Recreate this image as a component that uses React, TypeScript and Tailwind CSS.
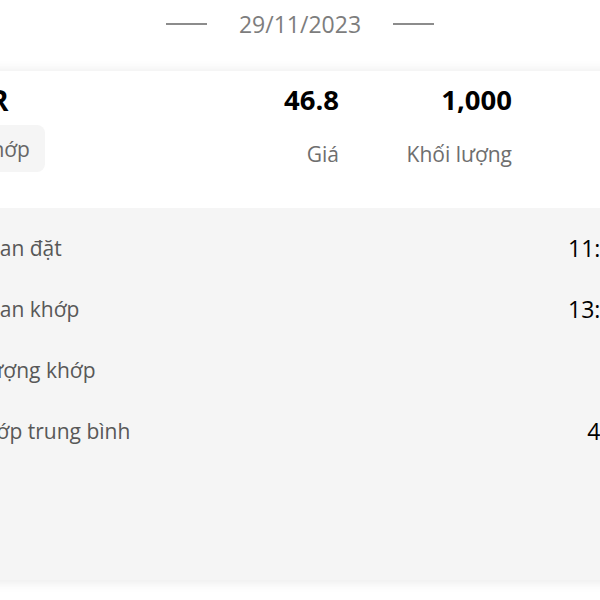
const rows = [
  { label: "Thời gian đặt", value: "11:23:45" },
  { label: "Thời gian khớp", value: "13:05:12" },
  { label: "Khối lượng khớp", value: "1,000" },
  { label: "Giá khớp trung bình", value: "46,800" },
];

export default function App() {
  return (
    <div className="flex h-[600px] w-[600px] flex-col overflow-hidden bg-white font-['Open_Sans',sans-serif]">
      <div className="flex h-[48px] shrink-0 items-center justify-center gap-8">
        <span className="h-[1.5px] w-[41px] bg-[#8c8c8c]" />
        <span className="text-[23px] leading-[30px] text-[#7d7d7d]">29/11/2023</span>
        <span className="h-[1.5px] w-[41px] bg-[#8c8c8c]" />
      </div>

      <div className="mt-[23px] -ml-[85px] flex h-[509px] w-[764px] shrink-0 flex-col shadow-[0_1px_12px_rgba(0,0,0,0.1)]">
        <div className="flex h-[137px] shrink-0 justify-between bg-white pt-[14px] pl-5 pr-[167px]">
          <div className="flex flex-col items-start">
            <span className="ml-[19px] text-[28px] font-bold leading-[30px] text-black">VCR</span>
            <span className="mt-[10px] -ml-[2px] rounded-lg bg-[#f5f5f5] px-[15px] py-[9.5px] text-[21px] leading-[28px] text-[#666]">
              Đã khớp
            </span>
          </div>
          <div className="flex">
            <div className="flex w-[120px] flex-col items-end">
              <span className="text-[27.5px] font-bold leading-[30px] text-black">46.8</span>
              <span className="mt-[25px] text-[21px] leading-[28px] text-[#6e6e6e]">Giá</span>
            </div>
            <div className="flex w-[173px] flex-col items-end">
              <span className="text-[27.5px] font-bold leading-[30px] text-black">1,000</span>
              <span className="mt-[25px] text-[21px] leading-[28px] text-[#6e6e6e]">Khối lượng</span>
            </div>
          </div>
        </div>

        <div className="flex flex-1 flex-col gap-[33px] bg-[#f5f5f5] px-5 pt-[26px]">
          {rows.map((r) => (
            <div key={r.label} className="flex items-center justify-between leading-[28px]">
              <span className="text-[21px] text-[#585858]">{r.label}</span>
              <span className="text-[23px] font-medium text-black">{r.value}</span>
            </div>
          ))}
        </div>
      </div>
    </div>
  );
}
